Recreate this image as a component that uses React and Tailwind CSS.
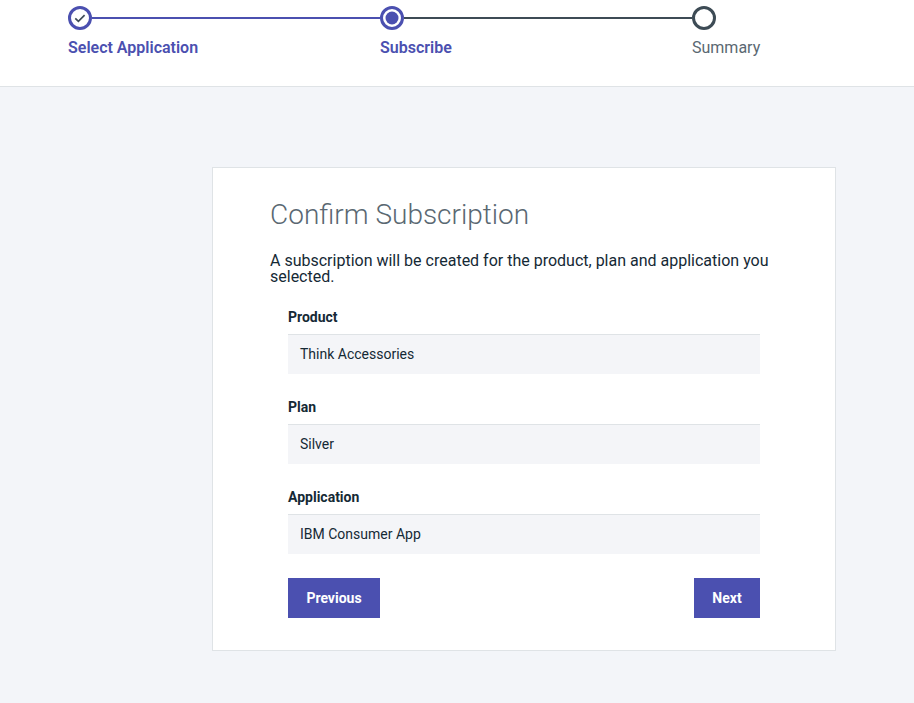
import { useState } from "react";

const steps = [
  { name: "Select Application", state: "done" },
  { name: "Subscribe", state: "current" },
  { name: "Summary", state: "todo" },
];

const fields = [
  { label: "Product", value: "Think Accessories" },
  { label: "Plan", value: "Silver" },
  { label: "Application", value: "IBM Consumer App" },
];

function StepCircle({ state }) {
  if (state === "done") {
    return (
      <svg width="24" height="24" viewBox="0 0 24 24" className="shrink-0">
        <circle cx="12" cy="12" r="10.5" fill="white" stroke="#4b50b0" strokeWidth="3" />
        <path d="M7.3 12.3l3.1 3 6.2-6.2" fill="none" stroke="#3d4b55" strokeWidth="1.7" />
      </svg>
    );
  }
  if (state === "current") {
    return (
      <svg width="24" height="24" viewBox="0 0 24 24" className="shrink-0">
        <circle cx="12" cy="12" r="10.5" fill="white" stroke="#4b50b0" strokeWidth="3" />
        <circle cx="12" cy="12" r="6.5" fill="#4b50b0" />
      </svg>
    );
  }
  return (
    <svg width="24" height="24" viewBox="0 0 24 24" className="shrink-0">
      <circle cx="12" cy="12" r="10.5" fill="white" stroke="#3d4b55" strokeWidth="3" />
    </svg>
  );
}

function Step({ step, last, nextDone }) {
  const active = step.state !== "todo";
  return (
    <div className={last ? "flex flex-col" : "flex w-[312px] flex-col"}>
      <div className="flex items-center">
        <StepCircle state={step.state} />
        {!last && (
          <div className={nextDone ? "h-[2px] flex-1 bg-[#4b50b0]" : "h-[2px] flex-1 bg-[#3d4b55]"} />
        )}
      </div>
      <span
        className={
          active
            ? "mt-[7px] text-[16px] leading-[22px] font-semibold text-[#4b50b0]"
            : "mt-[7px] text-[16px] leading-[22px] text-[#5a6872]"
        }
      >
        {step.name}
      </span>
    </div>
  );
}

export default function App() {
  const [data] = useState(fields);

  return (
    <div className="min-h-[703px] bg-[#f3f5f9]" style={{ fontFamily: '"Roboto", "Noto Sans", sans-serif' }}>
      <div className="h-[87px] border-b border-[#dfe3e6] bg-white pl-[68px] pt-[6px]">
        <div className="flex">
          {steps.map((s, i) => (
            <Step
              key={s.name}
              step={s}
              last={i === steps.length - 1}
              nextDone={i < steps.length - 1 && steps[i + 1].state !== "todo"}
            />
          ))}
        </div>
      </div>

      <div className="pl-[212px] pt-[80px]">
        <div className="w-[624px] border border-[#dfe3e6] bg-white pl-[57px] pr-[75px] pt-[28px] pb-[32px]">
          <h1 className="text-[28px] leading-[38px] font-light text-[#5a6872]">Confirm Subscription</h1>
          <p className="mt-[19px] w-[515px] text-[16px] leading-[16px] text-[#152935]">
            A subscription will be created for the product, plan and application you selected.
          </p>

          <div className="mt-[23px] pl-[18px]">
            {data.map((f, i) => (
              <div key={f.label} className={i === 0 ? "" : "mt-[24px]"}>
                <div className="text-[14px] leading-[18px] font-bold text-[#152935]">{f.label}</div>
                <div className="mt-[8px] flex h-[40px] items-center border-t border-[#dfe3e6] bg-[#f4f5f8] px-[12px] text-[14px] text-[#152935]">
                  {f.value}
                </div>
              </div>
            ))}

            <div className="mt-[24px] flex justify-between">
              <button className="h-[40px] w-[92px] bg-[#4b50b0] text-[14px] font-bold text-white">Previous</button>
              <button className="h-[40px] w-[66px] bg-[#4b50b0] text-[14px] font-bold text-white">Next</button>
            </div>
          </div>
        </div>
      </div>
    </div>
  );
}
